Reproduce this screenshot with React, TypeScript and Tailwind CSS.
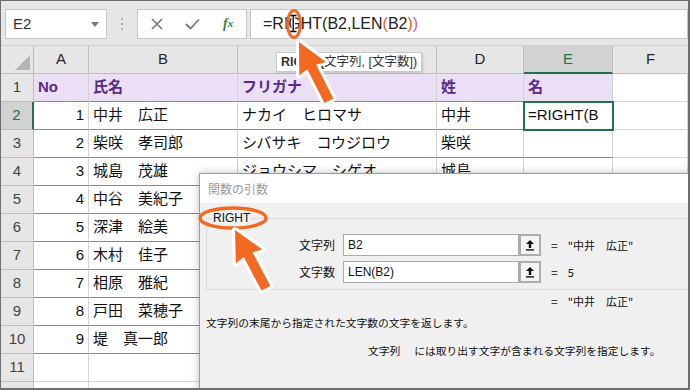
const people = [
  { no: 1, name: "中井　広正", kana: "ナカイ　ヒロマサ", sei: "中井" },
  { no: 2, name: "柴咲　孝司郎", kana: "シバサキ　コウジロウ", sei: "柴咲" },
  { no: 3, name: "城島　茂雄", kana: "ジョウシマ　シゲオ", sei: "城島" },
  { no: 4, name: "中谷　美紀子", kana: "ナカタニ　ミキコ", sei: "中谷" },
  { no: 5, name: "深津　絵美", kana: "フカツ　エミ", sei: "深津" },
  { no: 6, name: "木村　佳子", kana: "キムラ　ヨシコ", sei: "木村" },
  { no: 7, name: "相原　雅紀", kana: "アイハラ　マサキ", sei: "相原" },
  { no: 8, name: "戸田　菜穂子", kana: "トダ　ナホコ", sei: "戸田" },
  { no: 9, name: "堤　真一郎", kana: "ツツミ　シンイチロウ", sei: "堤" },
];

const arrowD = "M0 0 L15 30 L5 28 L5 66 L-5 66 L-5 28 L-15 30 Z";

function RowHead({ n, active }: { n: number; active?: boolean }) {
  return (
    <div
      className={`w-[33px] shrink-0 h-full flex items-center justify-center border-b border-[#bdbdbd] ${
        active ? "bg-[#d2d2d2] text-[#217346] border-r-2 border-r-[#217346]" : "bg-[#e6e6e6] text-[#444] border-r"
      }`}
    >
      {n}
    </div>
  );
}

function Cell({
  w,
  children,
  purple,
  right,
  className = "",
}: {
  w: string;
  children?: React.ReactNode;
  purple?: boolean;
  right?: boolean;
  className?: string;
}) {
  return (
    <div
      className={`${w} shrink-0 h-full flex items-center px-[4px] whitespace-nowrap overflow-hidden border-r border-b border-[#d4d4d4] ${
        purple ? "border-b-[#a66fd6]" : ""
      } ${right ? "justify-end" : ""} ${className}`}
    >
      {children}
    </div>
  );
}

function UpButton() {
  return (
    <div className="w-[22px] h-[22px] shrink-0 border-2 border-[#adadad] bg-[#f4f4f4] flex items-center justify-center">
      <svg width="10" height="12" viewBox="0 0 10 12">
        <path d="M5 1 L9 5 H6.2 V9 H3.8 V5 H1 Z" fill="#111" />
        <rect x="1" y="10.2" width="8" height="1.4" fill="#111" />
      </svg>
    </div>
  );
}

export default function App() {
  return (
    <div className="relative w-[690px] h-[390px] overflow-hidden bg-white border-t border-l border-r-2 border-b-2 border-[#6e6e6e] font-['Liberation_Sans','Noto_Sans_CJK_JP',sans-serif]">
      {/* formula bar */}
      <div className="h-[45px] bg-[#e6e6e6] border-b border-[#d0d0d0] flex items-start pt-[8px] pl-[4px]">
        <div className="w-[102px] h-[30px] shrink-0 bg-white border border-[#c6c6c6] flex items-center pl-[7px] pr-[7px] text-[15px] text-[#333]">
          <span className="flex-1">E2</span>
          <svg width="8" height="5" viewBox="0 0 8 5">
            <path d="M0 0 H8 L4 5 Z" fill="#7a7a7a" />
          </svg>
        </div>
        <div className="w-[30px] h-[30px] shrink-0 flex flex-col items-center justify-center gap-[3px]">
          <span className="w-[2px] h-[2px] bg-[#a8a8a8]" />
          <span className="w-[2px] h-[2px] bg-[#a8a8a8]" />
          <span className="w-[2px] h-[2px] bg-[#a8a8a8]" />
        </div>
        <div className="w-[110px] h-[30px] shrink-0 bg-white border border-[#c6c6c6] flex items-center pl-[1px]">
          <div className="w-[36px] flex justify-center">
            <svg width="12" height="12" viewBox="0 0 12 12">
              <path d="M1 1 L11 11 M11 1 L1 11" stroke="#777" strokeWidth="1.6" />
            </svg>
          </div>
          <div className="w-[36px] flex justify-center">
            <svg width="15" height="12" viewBox="0 0 15 12">
              <path d="M1 6 L5.5 10.5 L14 1.5" stroke="#777" strokeWidth="1.8" fill="none" />
            </svg>
          </div>
          <div className="w-[36px] flex justify-center font-['Liberation_Serif',serif] italic font-bold text-[14px] text-[#3d7d4a] leading-none">
            f<span className="text-[11px] relative top-[1px]">x</span>
          </div>
        </div>
        <div className="ml-[3px] flex-1 h-[30px] bg-white border border-[#c6c6c6] flex items-center pl-[12px] text-[16px] text-[#222]">
          =RIGHT(B2,LEN<span className="text-[#e0592b]">(</span>B2<span className="text-[#e0592b]">)</span>
          <span className="text-[#c25aa6]">)</span>
        </div>
      </div>

      {/* column headers */}
      <div className="h-[28px] flex text-[15px] text-[#262626]">
        <div className="w-[33px] shrink-0 h-full bg-[#e6e6e6] border-r border-b border-[#bdbdbd] flex items-end justify-end p-[3px]">
          <svg width="15" height="15" viewBox="0 0 15 15">
            <path d="M15 0 V15 H0 Z" fill="#b5b5b5" />
          </svg>
        </div>
        {[
          ["A", "w-[55px]"],
          ["B", "w-[149px]"],
          ["C", "w-[199px]"],
          ["D", "w-[87px]"],
        ].map(([l, w]) => (
          <div key={l} className={`${w} shrink-0 h-full bg-[#e6e6e6] border-r border-b border-[#bdbdbd] flex items-center justify-center`}>
            {l}
          </div>
        ))}
        <div className="w-[89px] shrink-0 h-full bg-[#d2d2d2] text-[#217346] border-r border-[#bdbdbd] border-b-2 border-b-[#217346] flex items-center justify-center">
          E
        </div>
        <div className="flex-1 h-full bg-[#e6e6e6] border-b border-[#bdbdbd] flex items-center justify-center">F</div>
      </div>

      {/* row 1: table header */}
      <div className="h-[28px] flex text-[15px]">
        <RowHead n={1} />
        {[
          ["No", "w-[55px]"],
          ["氏名", "w-[149px]"],
          ["フリガナ", "w-[199px]"],
          ["姓", "w-[87px]"],
          ["名", "w-[89px]"],
        ].map(([t, w]) => (
          <Cell key={t} w={w} purple className="bg-[#ebdff6] font-bold text-[#5b2a88]">
            {t}
          </Cell>
        ))}
        <Cell w="flex-1" />
      </div>

      {/* data rows */}
      {people.map((p) => (
        <div key={p.no} className="h-[28px] flex text-[15px] text-[#111]">
          <RowHead n={p.no + 1} active={p.no === 1} />
          <Cell w="w-[55px]" purple right>
            {p.no}
          </Cell>
          <Cell w="w-[149px]" purple>
            {p.name}
          </Cell>
          <Cell w="w-[199px]" purple>
            {p.kana}
          </Cell>
          <Cell w="w-[87px]" purple>
            {p.sei}
          </Cell>
          {p.no === 1 ? (
            <Cell w="w-[89px]" purple className="relative z-10 outline-2 outline-[#217346] -outline-offset-1">
              =RIGHT(B
            </Cell>
          ) : (
            <Cell w="w-[89px]" purple />
          )}
          <Cell w="flex-1" />
        </div>
      ))}

      {[11, 12].map((n) => (
        <div key={n} className="h-[28px] flex text-[15px]">
          <RowHead n={n} />
          <Cell w="w-[55px]" />
          <Cell w="w-[149px]" />
          <Cell w="w-[199px]" />
          <Cell w="w-[87px]" />
          <Cell w="w-[89px]" />
          <Cell w="flex-1" />
        </div>
      ))}

      {/* syntax tooltip */}
      <div className="absolute left-[275px] top-[51px] h-[20px] px-[4px] bg-white border border-[#c8c8c8] shadow-[1px_1px_2px_rgba(0,0,0,0.15)] flex items-center text-[12.5px] text-[#333] whitespace-nowrap">
        <span className="font-bold">RIGHT(</span>文字列, [文字数])
      </div>

      {/* function arguments dialog */}
      <div className="absolute left-[198px] top-[172px] w-[520px] h-[230px] bg-[#f0f0f0] border border-[#9c9c9c] shadow-[0_0_8px_rgba(0,0,0,0.25)] text-[#111] font-['Noto_Sans_CJK_JP',sans-serif]">
        <div className="h-[29px] bg-white flex items-center pl-[8px] text-[12px] text-[#9a9a9a]">関数の引数</div>
        <div className="pt-[15px] pl-[6px]">
          <div className="relative h-[72px] border border-[#dcdcdc] pt-[15px] flex flex-col gap-[5px]">
            <span className="absolute left-[5px] -top-[9px] px-[1px] bg-[#f0f0f0] text-[12px] leading-[16px] font-['Liberation_Sans',sans-serif]">
              RIGHT
            </span>
            {[
              ["文字列", "B2", "\"中井　広正\""],
              ["文字数", "LEN(B2)", "5"],
            ].map(([label, val, res]) => (
              <div key={label} className="h-[22px] flex items-center">
                <div className="w-[128px] shrink-0 text-right text-[12px]">{label}</div>
                <div className="ml-[8px] w-[176px] h-[22px] shrink-0 bg-white border border-[#aaa] flex items-center pl-[4px] text-[12px] font-['Liberation_Sans',sans-serif]">
                  {val}
                </div>
                <UpButton />
                <span className="ml-[10px] text-[12px]">=</span>
                <span className="ml-[10px] text-[11px]">{res}</span>
              </div>
            ))}
          </div>
        </div>
        <div className="mt-[4px] pl-[351px] h-[14px] flex items-center text-[11px]">
          <span className="text-[12px]">=</span>
          <span className="ml-[10px]">"中井　広正"</span>
        </div>
        <div className="mt-[8px] pl-[6px] h-[14px] flex items-center text-[10.75px]">
          文字列の末尾から指定された文字数の文字を返します。
        </div>
        <div className="mt-[14px] pl-[168px] h-[14px] flex items-center text-[10.75px]">
          <span>文字列</span>
          <span className="ml-[14px]">には取り出す文字が含まれる文字列を指定します。</span>
        </div>
      </div>

      {/* callout drawings */}
      <svg className="absolute left-0 top-0 pointer-events-none" width="690" height="390" viewBox="0 0 690 390">
        <path d="M289 14.5 H295.5 M292.2 14.5 V30.5 M289 30.5 H295.5" stroke="#fff" strokeWidth="3.5" fill="none" />
        <path d="M289 14.5 H295.5 M292.2 14.5 V30.5 M289 30.5 H295.5" stroke="#000" strokeWidth="1.3" fill="none" />
        <ellipse cx="293" cy="23" rx="6.5" ry="13.5" fill="none" stroke="#f26a21" strokeWidth="3" />
        <g transform="translate(298 41) rotate(-27)">
          <path d={arrowD} fill="#f26a21" stroke="#fff" strokeWidth="6" strokeLinejoin="round" paintOrder="stroke" />
        </g>
        <ellipse cx="232" cy="217" rx="33" ry="10" fill="none" stroke="#f26a21" strokeWidth="3.5" />
        <g transform="translate(234 229) rotate(-28)">
          <path d={arrowD} fill="#f26a21" stroke="#fff" strokeWidth="6" strokeLinejoin="round" paintOrder="stroke" />
        </g>
      </svg>
    </div>
  );
}
